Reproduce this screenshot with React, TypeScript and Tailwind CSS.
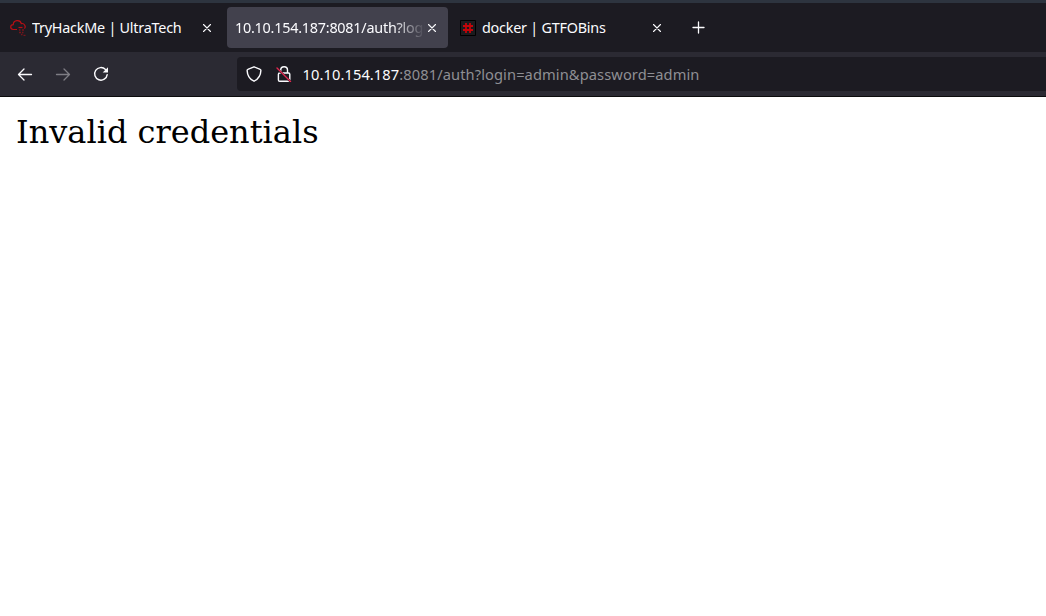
import type { ReactNode } from "react";

function CloseIcon() {
  return (
    <svg className="h-2 w-2 shrink-0" viewBox="0 0 8 8" fill="none" stroke="#fbfbfe" strokeWidth="1.1" strokeLinecap="round">
      <path d="M.5.5l7 7M7.5.5l-7 7" />
    </svg>
  );
}

function CloudFavicon() {
  return (
    <svg className="mr-1.5 h-4 w-4 shrink-0" viewBox="0 0 16 16" fill="none" stroke="#b80f15" strokeWidth="1.2">
      <path d="M7 9.500H3.300C-.2 9.300-.1 4.800 3.200 4.600 3.500-.3 10.300-.7 11.300 3.600c3.300-.7 4.800 3.200 3.200 5" />
      <path d="M8.500 7.500h4" />
      <path d="M9 10h1.500M12 10h2M9 12.500h2M12 12.500h1.500M11 14.500h1.500M13.500 15.300h2" stroke="#76151b" strokeWidth="1.300" />
    </svg>
  );
}

function HashFavicon() {
  return (
    <svg className="mr-1.5 h-4 w-4 shrink-0" viewBox="0 0 16 16" fill="none">
      <path d="M.5.5h15v15H.5z" fill="#1b1b1e" stroke="#000" />
      <path d="M6 3v10M10 3v10M3 6h10M3 10h10" stroke="#c40509" strokeWidth="1.8" />
    </svg>
  );
}

function Tab({ icon, title, active = false }: { icon?: ReactNode; title: string; active?: boolean }) {
  return (
    <div className={`flex h-[41px] w-[221px] shrink-0 items-center rounded pl-2 pr-3 ${active ? "bg-[#42414d]" : ""}`}>
      {icon}
      <span
        className={`min-w-0 overflow-hidden whitespace-nowrap leading-[23px] ${
          active ? "w-[190px] [mask-image:linear-gradient(to_left,transparent,black_32px)]" : ""
        }`}
      >
        {title}
      </span>
      <span className="ml-auto flex">
        <CloseIcon />
      </span>
    </div>
  );
}

export default function App() {
  return (
    <div className="flex h-[616px] w-[1046px] flex-col overflow-hidden bg-white font-['Noto_Sans',sans-serif] text-[#fbfbfe]">
      <header className="flex h-[52px] shrink-0 items-start gap-1 border-t-[3px] border-[#2d343f] bg-[#1c1b22] pl-0.5 pt-1 text-[14.4px] tracking-[-0.24px]">
        <Tab icon={<CloudFavicon />} title="TryHackMe | UltraTech" />
        <Tab title="10.10.154.187:8081/auth?login=admin&password=admin" active />
        <Tab icon={<HashFavicon />} title="docker | GTFOBins" />
        <button className="flex h-[41px] w-[42px] items-center justify-center" aria-label="New tab">
          <svg className="h-[13px] w-[13px]" viewBox="0 0 13 13" fill="none" stroke="#fbfbfe" strokeWidth="1.3" strokeLinecap="round">
            <path d="M6.500 1v11M1 6.500h11" />
          </svg>
        </button>
      </header>
      <nav className="flex h-[45px] shrink-0 items-center border-b border-[#0c0c0d] bg-[#2b2a33] pl-[17px]">
        <svg className="h-4 w-4" viewBox="0 0 16 16" fill="none" stroke="#fbfbfe" strokeWidth="1.3" strokeLinecap="round" strokeLinejoin="round">
          <path d="M7 3L1.500 8.500 7 14M1.500 8.500h13" />
        </svg>
        <svg className="ml-[22px] h-4 w-4" viewBox="0 0 16 16" fill="none" stroke="#7e7d84" strokeWidth="1.3" strokeLinecap="round" strokeLinejoin="round">
          <path d="M9 3L14.500 8.500 9 14M14.500 8.500h-13" />
        </svg>
        <svg className="ml-[22px] h-4 w-4" viewBox="0 0 16 16" fill="none" stroke="#fbfbfe" strokeWidth="1.400" strokeLinecap="round">
          <path d="M12.500 3.500A6.300 6.300 0 1 0 14.200 8.600" />
          <path d="M15 1.200v5.300H9.700z" fill="#fbfbfe" stroke="none" />
        </svg>
        <div className="ml-32 flex h-[34px] flex-1 items-center rounded-l bg-[#1c1b22] pl-[9px]">
          <svg className="h-4 w-4" viewBox="0 0 16 16" fill="none" stroke="#fbfbfe" strokeWidth="1.400" strokeLinejoin="round">
            <path d="M8 .8l6.200 2.500c.6.2.7.6.7 1.100-.2 5-2.200 8.700-6.900 10.800C3.300 13.100 1.300 9.400 1.100 4.400c0-.5.1-.9.7-1.100z" />
          </svg>
          <svg className="ml-3.5 h-4 w-4" viewBox="0 0 16 16" fill="none" stroke="#fbfbfe" strokeWidth="1.400">
            <path d="M4.700 7V4.200a3.400 3.400 0 0 1 6.800 0V7M3.700 7h8.800q1.300 0 1.300 1.300v5.600q0 1.300-1.300 1.300H3.700q-1.300 0-1.300-1.300V8.300Q2.400 7 3.700 7z" />
            <path d="M1 2.500l13.500 13" stroke="#1c1b22" strokeWidth="2.200" />
            <path d="M1 2l13.500 13.500" stroke="#e22850" strokeWidth="1.400" strokeLinecap="round" />
          </svg>
          <span className="ml-[10.5px] whitespace-nowrap text-[14.67px] tracking-[0.09px] text-[#8f8f94]">
            <span className="text-[#fbfbfe]">10.10.154.187</span>:8081/auth?login=admin&amp;password=admin
          </span>
        </div>
      </nav>
      <main className="flex-1 bg-white px-4 pt-[17px] font-['DejaVu_Serif',serif] text-[32px] leading-[37px] text-black">
        Invalid credentials
      </main>
    </div>
  );
}
